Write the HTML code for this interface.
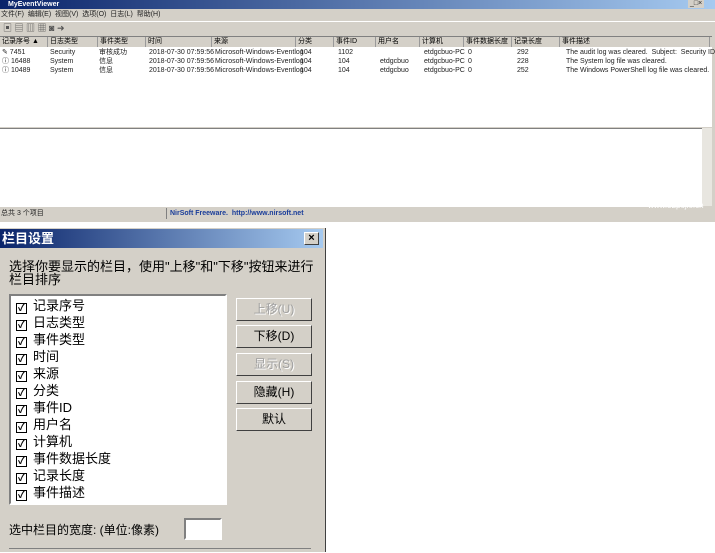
<!DOCTYPE html><html><head><style>
body{margin:0;width:715px;height:552px;background:#fff;position:relative;overflow:hidden;font-family:"Liberation Sans","Noto Sans CJK SC",sans-serif}
.a{position:absolute}
.t{font-size:7px;color:#222;white-space:nowrap;line-height:9px}
.hd{font-size:7px;color:#000;border-right:1px solid #999;height:10px;line-height:10px;padding-left:2px;box-sizing:border-box;white-space:nowrap;overflow:hidden}
.btn{position:absolute;left:236px;width:76px;height:23px;background:#d4d0c8;border:1px solid;border-color:#fff #404040 #404040 #fff;box-sizing:border-box;font-size:12px;text-align:center;line-height:21px;color:#000}
.dis{color:#a0a0a0;text-shadow:1px 1px #fff}
.it{position:absolute;left:16px;font-size:13px;height:17px;line-height:17px}
.cb{display:inline-block;width:11px;height:11px;border:1px solid #000;box-sizing:border-box;vertical-align:-1px;margin-right:6px;font-size:10px;line-height:9px;text-align:center;font-weight:bold}
</style></head><body>
<div class="a" style="left:0;top:0;width:715px;height:222px;background:#d4d0c8"></div>
<div class="a" style="left:0;top:0;width:715px;height:9px;background:linear-gradient(90deg,#0a246a,#a6caf0)"></div>
<div class="a t" style="left:8px;top:0;color:#fff;font-weight:bold;font-size:7px;line-height:9px">MyEventViewer</div>
<div class="a t" style="left:688px;top:0;font-size:7px;background:#d4d0c8;line-height:8px;padding:0 2px">_□×</div>
<div class="a t" style="left:1px;top:10px;line-height:10px">文件(F)&nbsp; 编辑(E)&nbsp; 视图(V)&nbsp; 选项(O)&nbsp; 日志(L)&nbsp; 帮助(H)</div>
<div class="a" style="left:0;top:21px;width:715px;height:1px;background:#fff"></div>
<div class="a t" style="left:3px;top:24px;font-size:9px;color:#555">▣ ▤ ▥ ▦ ◙ ➜</div>
<div class="a" style="left:0;top:36px;width:712px;height:90px;background:#fff;border-top:1px solid #808080"></div>
<div class="a" style="left:0;top:37px;width:712px;height:10px;background:#d4d0c8;display:flex">
<div class="hd" style="width:48px">记录序号 ▲</div><div class="hd" style="width:50px">日志类型</div><div class="hd" style="width:48px">事件类型</div><div class="hd" style="width:66px">时间</div><div class="hd" style="width:84px">来源</div><div class="hd" style="width:38px">分类</div><div class="hd" style="width:42px">事件ID</div><div class="hd" style="width:44px">用户名</div><div class="hd" style="width:44px">计算机</div><div class="hd" style="width:48px">事件数据长度</div><div class="hd" style="width:48px">记录长度</div><div class="hd" style="width:150px">事件描述</div></div>
<div class="a" style="left:0;top:47px;width:712px">
<div class="a t" style="top:1px;left:2px">✎ 7451</div><div class="a t" style="top:1px;left:50px">Security</div><div class="a t" style="top:1px;left:99px">审核成功</div><div class="a t" style="top:1px;left:149px">2018-07-30 07:59:56</div><div class="a t" style="top:1px;left:215px">Microsoft-Windows-Eventlog</div><div class="a t" style="top:1px;left:300px">104</div><div class="a t" style="top:1px;left:338px">1102</div><div class="a t" style="top:1px;left:424px">etdgcbuo-PC</div><div class="a t" style="top:1px;left:468px">0</div><div class="a t" style="top:1px;left:517px">292</div><div class="a t" style="top:1px;left:566px">The audit log was cleared.&nbsp; Subject:&nbsp; Security ID:...</div>
<div class="a t" style="top:10px;left:2px">ⓘ 16488</div><div class="a t" style="top:10px;left:50px">System</div><div class="a t" style="top:10px;left:99px">信息</div><div class="a t" style="top:10px;left:149px">2018-07-30 07:59:56</div><div class="a t" style="top:10px;left:215px">Microsoft-Windows-Eventlog</div><div class="a t" style="top:10px;left:300px">104</div><div class="a t" style="top:10px;left:338px">104</div><div class="a t" style="top:10px;left:380px">etdgcbuo</div><div class="a t" style="top:10px;left:424px">etdgcbuo-PC</div><div class="a t" style="top:10px;left:468px">0</div><div class="a t" style="top:10px;left:517px">228</div><div class="a t" style="top:10px;left:566px">The System log file was cleared.</div>
<div class="a t" style="top:19px;left:2px">ⓘ 10489</div><div class="a t" style="top:19px;left:50px">System</div><div class="a t" style="top:19px;left:99px">信息</div><div class="a t" style="top:19px;left:149px">2018-07-30 07:59:56</div><div class="a t" style="top:19px;left:215px">Microsoft-Windows-Eventlog</div><div class="a t" style="top:19px;left:300px">104</div><div class="a t" style="top:19px;left:338px">104</div><div class="a t" style="top:19px;left:380px">etdgcbuo</div><div class="a t" style="top:19px;left:424px">etdgcbuo-PC</div><div class="a t" style="top:19px;left:468px">0</div><div class="a t" style="top:19px;left:517px">252</div><div class="a t" style="top:19px;left:566px">The Windows PowerShell log file was cleared.</div>
</div>
<div class="a" style="left:0;top:128px;width:702px;height:78px;background:#fff;border-top:1px solid #808080"></div>
<div class="a" style="left:702px;top:128px;width:10px;height:78px;background:#e8e6e0"></div>
<div class="a t" style="left:1px;top:209px;line-height:10px">总共 3 个项目</div>
<div class="a" style="left:166px;top:208px;width:1px;height:11px;background:#808080"></div>
<div class="a t" style="left:170px;top:209px;line-height:10px;color:#1a3d9a;font-weight:bold">NirSoft Freeware.&nbsp; http://www.nirsoft.net</div>
<div class="a t" style="left:648px;top:201px;color:#fff;font-size:8px">www.52pojie.cn</div>
<div class="a" style="left:0;top:228px;width:326px;height:324px;background:#d4d0c8;border-right:1px solid #404040;box-sizing:border-box"></div>
<div class="a" style="left:0;top:229px;width:323px;height:19px;background:linear-gradient(90deg,#0a246a,#a6caf0)"></div>
<div class="a" style="left:2px;top:229px;color:#fff;font-weight:bold;font-size:13px;line-height:19px">栏目设置</div>
<div class="a" style="left:304px;top:232px;width:15px;height:13px;background:#d4d0c8;border:1px solid;border-color:#fff #404040 #404040 #fff;box-sizing:border-box;font-size:11px;line-height:11px;text-align:center;font-weight:bold">×</div>
<div class="a" style="left:9px;top:260px;font-size:13px;line-height:13px;width:310px">选择你要显示的栏目，使用"上移"和"下移"按钮来进行栏目排序</div>
<div class="a" style="left:9px;top:294px;width:218px;height:211px;background:#fff;border:2px solid;border-color:#808080 #fff #fff #808080;box-sizing:border-box"></div>
<div class="it" style="top:297px"><span class="cb">✓</span>记录序号</div>
<div class="it" style="top:314px"><span class="cb">✓</span>日志类型</div>
<div class="it" style="top:331px"><span class="cb">✓</span>事件类型</div>
<div class="it" style="top:348px"><span class="cb">✓</span>时间</div>
<div class="it" style="top:365px"><span class="cb">✓</span>来源</div>
<div class="it" style="top:382px"><span class="cb">✓</span>分类</div>
<div class="it" style="top:399px"><span class="cb">✓</span>事件ID</div>
<div class="it" style="top:416px"><span class="cb">✓</span>用户名</div>
<div class="it" style="top:433px"><span class="cb">✓</span>计算机</div>
<div class="it" style="top:450px"><span class="cb">✓</span>事件数据长度</div>
<div class="it" style="top:467px"><span class="cb">✓</span>记录长度</div>
<div class="it" style="top:484px"><span class="cb">✓</span>事件描述</div>
<div class="btn dis" style="top:298px">上移(U)</div>
<div class="btn" style="top:325px">下移(D)</div>
<div class="btn dis" style="top:353px">显示(S)</div>
<div class="btn" style="top:381px">隐藏(H)</div>
<div class="btn" style="top:408px">默认</div>
<div class="a" style="left:9px;top:521px;font-size:12px">选中栏目的宽度: (单位:像素)</div>
<div class="a" style="left:184px;top:518px;width:38px;height:22px;background:#fff;border:2px solid;border-color:#808080 #fff #fff #808080;box-sizing:border-box"></div>
<div class="a" style="left:9px;top:548px;width:302px;height:4px;border-top:1px solid #808080"></div>
</body></html>
